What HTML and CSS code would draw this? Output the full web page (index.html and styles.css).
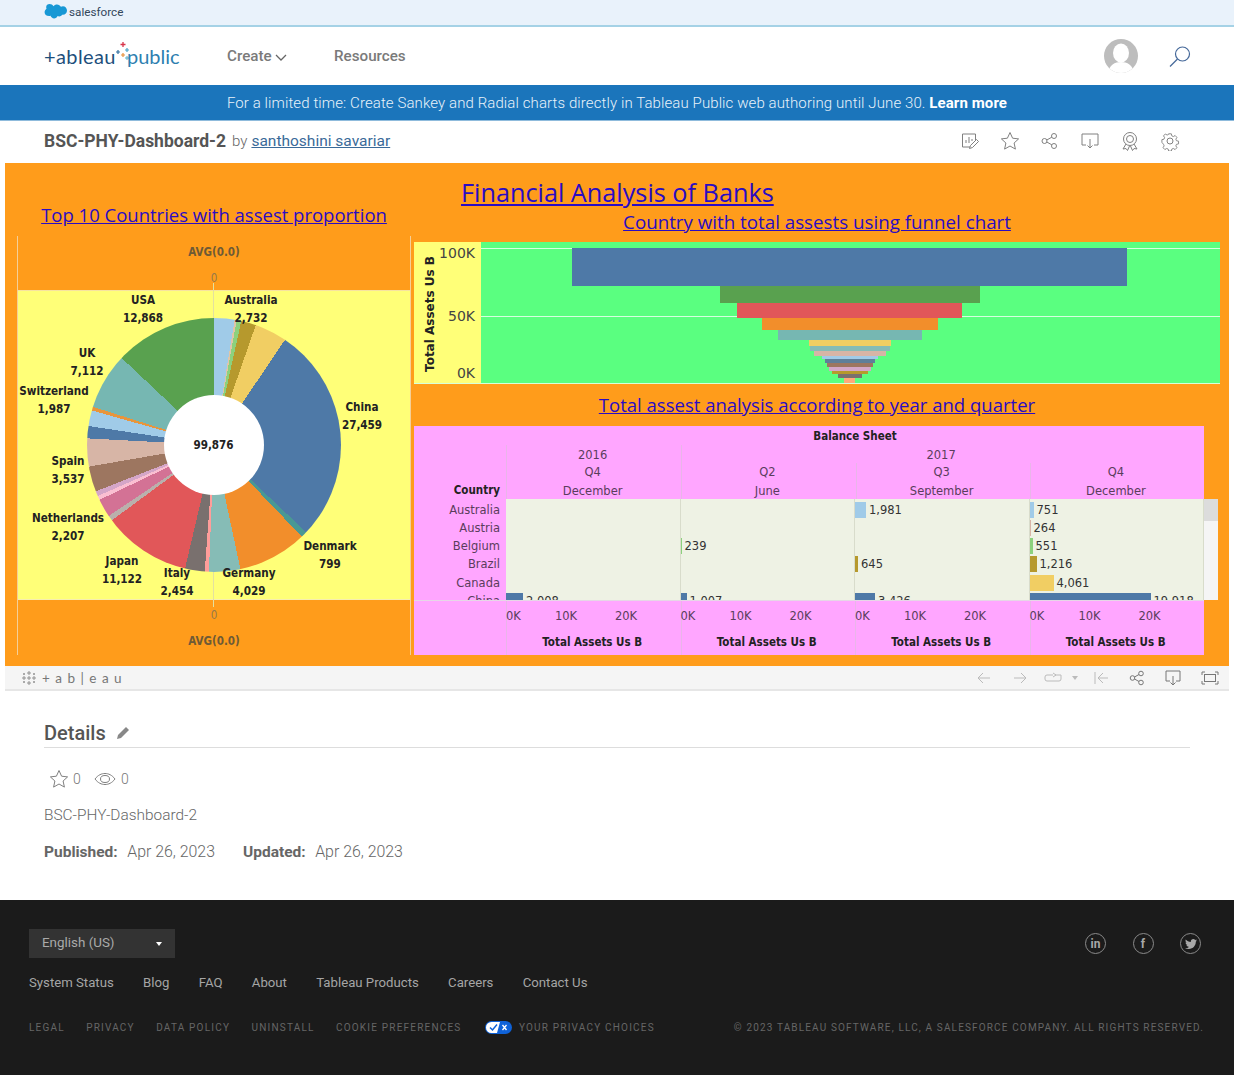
FILE: index.html
```html
<!DOCTYPE html>
<html lang="en">
<head>
    <meta charset="UTF-8">
    <meta name="viewport" content="width=device-width, initial-scale=1.0">
    <title>BSC-PHY-Dashboard-2 - Tableau Public</title>
    <link rel="stylesheet" href="styles.css">
</head>
<body>
    <div class="topbar">
        <svg class="sf-cloud" width="23" height="16" viewBox="0 0 23 16"><path d="M9.5 2.2C10.3 1 11.6.4 13 .4c1.700 0 3.200 1 3.900 2.300.7-.3 1.300-.5 2-.5 2.300 0 4.100 2 4.100 4.300s-1.800 4.300-4.100 4.300c-.3 0-.6 0-.8-.1-.6 1-1.700 1.700-3 1.700-.5 0-1-.1-1.500-.4-.6 1.400-2 2.400-3.500 2.400-1.700 0-3.100-1.100-3.600-2.600-.2 0-.5.1-.7.1C2.300 12.100.6 10.400.6 8.200c0-1.400.8-2.700 1.900-3.400C2.300 4.300 2.200 3.700 2.200 3.100 2.200 1.300 3.700 0 5.600 0c1.600 0 3 .9 3.900 2.200z" fill="#1798d5"/></svg>
        <span class="sf-name">salesforce</span>
    </div>

    <nav class="nav">
        <div class="logo">
            <span class="logo-tableau">+ableau</span>
            <svg class="logo-spark" width="14" height="24" viewBox="0 0 14 24"><path d="M7 1v5M4.500 3.500h5" stroke="#d8344a" stroke-width="1.300"/><path d="M2 9v4M0 11h4" stroke="#2f6f9f" stroke-width="1.200"/><path d="M11 7v4M9 9h4" stroke="#4aa3c7" stroke-width="1.200"/><path d="M7 12v4M5 14h4" stroke="#e8913a" stroke-width="1.200"/><path d="M11 15v4M9 17h4" stroke="#59b0c9" stroke-width="1"/></svg>
            <span class="logo-public">public</span>
        </div>
        <a class="nav-link nav-create">Create
            <svg width="12" height="7" viewBox="0 0 12 7"><path d="M1 1l5 5 5-5" fill="none" stroke="#666" stroke-width="1.300"/></svg>
        </a>
        <a class="nav-link">Resources</a>
        <div class="nav-right">
            <svg width="34" height="34" viewBox="0 0 34 34"><defs><clipPath id="avatarClip"><circle cx="17" cy="17" r="17"/></clipPath></defs><circle cx="17" cy="17" r="17" fill="#bdbdbd"/><g clip-path="url(#avatarClip)"><ellipse cx="17" cy="14" rx="8" ry="9.500" fill="#fff"/><path d="M4 34c1-8 7-11 13-11s12 3 13 11z" fill="#fff"/></g></svg>
            <svg class="search-icon" width="24" height="24" viewBox="0 0 24 24"><circle cx="14.500" cy="9" r="7" fill="none" stroke="#46699a" stroke-width="1.200"/><path d="M9.500 14L2 21.500" stroke="#46699a" stroke-width="1.200"/></svg>
        </div>
    </nav>

    <div class="banner">For a limited time: Create Sankey and Radial charts directly in Tableau Public web authoring until June 30. <b>Learn more</b></div>

    <div class="title-row">
        <h1 class="viz-title">BSC-PHY-Dashboard-2</h1>
        <span class="by">by</span>
        <a class="author">santhoshini savariar</a>
        <div class="title-icons">
            <svg width="20" height="20" viewBox="0 0 20 20"><path d="M10 16H2.500V3h13v6" class="ic"/><path d="M6 12V9M9 12V6M12 10V8" class="ic"/><path d="M9.500 17.500l1-3 6-6 2 2-6 6z" class="ic"/></svg>
            <svg width="20" height="20" viewBox="0 0 20 20"><path d="M10 1.500l2.600 5.700 6 .7-4.500 4.100 1.300 6.100-5.400-3.100-5.400 3.100 1.300-6.100L1.400 7.900l6-.7z" class="ic"/></svg>
            <svg width="20" height="20" viewBox="0 0 20 20"><circle cx="4.500" cy="10" r="2.500" class="ic"/><circle cx="14" cy="5" r="2.500" class="ic"/><circle cx="14" cy="15" r="2.500" class="ic"/><path d="M6.800 9l5-2.800M6.800 11l5 2.800" class="ic"/></svg>
            <svg width="20" height="20" viewBox="0 0 20 20"><path d="M6 14H2V3h16v11h-4" class="ic"/><path d="M10 8v9M7.500 14.500L10 17l2.500-2.500" class="ic"/></svg>
            <svg width="20" height="20" viewBox="0 0 20 20"><circle cx="10" cy="8" r="6.500" class="ic"/><circle cx="10" cy="8" r="3.500" class="ic"/><path d="M6 13l-3 5 3-.5 1.500 2 2-4.500M14 13l3 5-3-.5-1.500 2-2-4.500" class="ic"/></svg>
            <svg width="20" height="20" viewBox="0 0 20 20"><circle cx="10" cy="10" r="3" class="ic"/><path d="M8.500 2h3l.5 2.300 1.700.8 2-1.200 2 2.100-1.200 2 .7 1.700 2.300.5v3l-2.300.5-.7 1.700 1.200 2-2 2.100-2-1.200-1.700.7-.5 2.200h-3l-.5-2.200-1.700-.7-2 1.200-2-2.100 1.200-2-.7-1.700L1 11.500v-3l2.300-.5.700-1.700-1.200-2 2-2.100 2 1.200 1.700-.8z" class="ic" transform="translate(1 1) scale(.9)"/></svg>
        </div>
    </div>

    <section class="viz">
        <div class="viz-left">
            <h2 class="chart-title title-countries">Top 10 Countries with assest proportion</h2>
            <div class="pie-panel">
                <div class="pie-band pie-band-top">
                    <span class="band-label">AVG(0.0)</span>
                    <span class="band-zero">0</span>
                </div>
                <div class="pie-area">
                    <i class="axis-line axis-line-top"></i>
                    <i class="axis-line axis-line-bottom"></i>
                    <div class="pie">
                        <div class="pie-hole">99,876</div>
                    </div>
                    <div class="pie-label lbl-usa">USA<br>12,868</div>
                    <div class="pie-label lbl-australia">Australia<br>2,732</div>
                    <div class="pie-label lbl-uk">UK<br>7,112</div>
                    <div class="pie-label lbl-switzerland">Switzerland<br>1,987</div>
                    <div class="pie-label lbl-china">China<br>27,459</div>
                    <div class="pie-label lbl-spain">Spain<br>3,537</div>
                    <div class="pie-label lbl-netherlands">Netherlands<br>2,207</div>
                    <div class="pie-label lbl-denmark">Denmark<br>799</div>
                    <div class="pie-label lbl-japan">Japan<br>11,122</div>
                    <div class="pie-label lbl-italy">Italy<br>2,454</div>
                    <div class="pie-label lbl-germany">Germany<br>4,029</div>
                </div>
                <div class="pie-band pie-band-bottom">
                    <span class="band-zero">0</span>
                    <span class="band-label">AVG(0.0)</span>
                </div>
            </div>
        </div>

        <div class="viz-right">
            <h2 class="chart-title title-main">Financial Analysis of Banks</h2>
            <h2 class="chart-title title-funnel">Country with total assests using funnel chart</h2>

            <div class="funnel">
                <div class="funnel-axis">
                    <span class="funnel-axis-title">Total Assets Us B</span>
                    <span class="funnel-tick tick-100">100K</span>
                    <span class="funnel-tick tick-50">50K</span>
                    <span class="funnel-tick tick-0">0K</span>
                </div>
                <div class="funnel-plot">
                    <i class="gridline grid-100"></i>
                    <i class="gridline grid-50"></i>
                    <div class="funnel-bar t-blue" style="width:555px;height:38px"></div>
                    <div class="funnel-bar t-green" style="width:260px;height:17px"></div>
                    <div class="funnel-bar t-red" style="width:225px;height:15px"></div>
                    <div class="funnel-bar t-orange" style="width:176px;height:12px"></div>
                    <div class="funnel-bar t-teal" style="width:144px;height:10px"></div>
                    <div class="funnel-bar t-yellow" style="width:82px;height:6px"></div>
                    <div class="funnel-bar t-seafoam" style="width:80px;height:5px"></div>
                    <div class="funnel-bar t-tan" style="width:72px;height:5px"></div>
                    <div class="funnel-bar t-sky" style="width:56px;height:3px"></div>
                    <div class="funnel-bar t-slate" style="width:50px;height:4px"></div>
                    <div class="funnel-bar t-brown" style="width:46px;height:4px"></div>
                    <div class="funnel-bar t-lilac" style="width:42px;height:4px"></div>
                    <div class="funnel-bar t-olive" style="width:36px;height:3px"></div>
                    <div class="funnel-bar t-grey" style="width:24px;height:4px"></div>
                    <div class="funnel-bar t-peach" style="width:11px;height:5px"></div>
                </div>
            </div>

            <h2 class="chart-title title-table">Total assest analysis according to year and quarter</h2>

            <div class="crosstab">
                <div class="ct-sheet">Balance Sheet</div>
                <div class="ct-head">
                    <div class="ct-corner">Country</div>
                    <div class="ct-years">
                        <div class="ct-year ct-year-2016">2016</div>
                        <div class="ct-year ct-year-2017">2017</div>
                        <div class="ct-col ct-col-first">Q4<br>December</div>
                        <div class="ct-col">Q2<br>June</div>
                        <div class="ct-col">Q3<br>September</div>
                        <div class="ct-col">Q4<br>December</div>
                    </div>
                </div>
                <div class="ct-body">
                    <div class="ct-rows">
                        <div class="ct-row">Australia</div>
                        <div class="ct-row">Austria</div>
                        <div class="ct-row">Belgium</div>
                        <div class="ct-row">Brazil</div>
                        <div class="ct-row">Canada</div>
                        <div class="ct-row">China</div>
                    </div>
                    <div class="ct-pane">
                        <div class="ct-row"></div><div class="ct-row"></div><div class="ct-row"></div><div class="ct-row"></div><div class="ct-row"></div>
                        <div class="ct-row"><i class="ct-bar t-blue" style="width:17px"></i>2,008</div>
                    </div>
                    <div class="ct-pane">
                        <div class="ct-row"></div><div class="ct-row"></div>
                        <div class="ct-row"><i class="ct-bar t-mint" style="width:1px"></i>239</div>
                        <div class="ct-row"></div><div class="ct-row"></div>
                        <div class="ct-row"><i class="ct-bar t-blue" style="width:6px"></i>1,007</div>
                    </div>
                    <div class="ct-pane">
                        <div class="ct-row"><i class="ct-bar t-sky" style="width:11px"></i>1,981</div>
                        <div class="ct-row"></div><div class="ct-row"></div>
                        <div class="ct-row"><i class="ct-bar t-olive" style="width:3px"></i>645</div>
                        <div class="ct-row"></div>
                        <div class="ct-row"><i class="ct-bar t-blue" style="width:20px"></i>3,426</div>
                    </div>
                    <div class="ct-pane">
                        <div class="ct-row"><i class="ct-bar t-sky" style="width:4px"></i>751</div>
                        <div class="ct-row"><i class="ct-bar t-tan" style="width:1px"></i>264</div>
                        <div class="ct-row"><i class="ct-bar t-mint" style="width:3px"></i>551</div>
                        <div class="ct-row"><i class="ct-bar t-olive" style="width:7px"></i>1,216</div>
                        <div class="ct-row"><i class="ct-bar t-yellow" style="width:24px"></i>4,061</div>
                        <div class="ct-row"><i class="ct-bar t-blue" style="width:121px"></i>19,918</div>
                    </div>
                    <div class="ct-scroll"><i class="ct-thumb"></i></div>
                </div>
                <div class="ct-foot">
                    <div class="ct-foot-blank"></div>
                    <div class="ct-axis"><div class="ct-ticks"><span>0K</span><span>10K</span><span>20K</span></div><b>Total Assets Us B</b></div>
                    <div class="ct-axis"><div class="ct-ticks"><span>0K</span><span>10K</span><span>20K</span></div><b>Total Assets Us B</b></div>
                    <div class="ct-axis"><div class="ct-ticks"><span>0K</span><span>10K</span><span>20K</span></div><b>Total Assets Us B</b></div>
                    <div class="ct-axis"><div class="ct-ticks"><span>0K</span><span>10K</span><span>20K</span></div><b>Total Assets Us B</b></div>
                </div>
            </div>
        </div>
    </section>

    <div class="viz-toolbar">
        <div class="tb-logo">
            <svg width="16" height="16" viewBox="0 0 16 16"><path d="M8 1v4M6 3h4M8 11v4M6 13h4M1 8h4M3 6v4M11 8h4M13 6v4M8 6v4M6 8h4M3 3v2M2 4h2M13 3v2M12 4h2M3 11v2M2 12h2M13 11v2M12 12h2" stroke="#8a8a8a" stroke-width=".9" fill="none"/></svg>
            <span>+ a b | e a u</span>
        </div>
        <div class="tb-icons">
            <svg class="tb-left" width="14" height="12" viewBox="0 0 14 12"><path d="M13 6H1M6 1L1 6l5 5" class="ic-light"/></svg>
            <svg class="tb-right" width="14" height="12" viewBox="0 0 14 12"><path d="M1 6h12M8 1l5 5-5 5" class="ic-light"/></svg>
            <svg class="tb-replay" width="18" height="12" viewBox="0 0 18 12"><path d="M9 3H3a2 2 0 0 0-2 2v2a2 2 0 0 0 2 2h12a2 2 0 0 0 2-2V3H11M9 1l3 2-3 2" class="ic-light"/></svg>
            <span class="tb-caret"></span>
            <svg class="tb-first" width="15" height="14" viewBox="0 0 15 14"><path d="M1 1v12M14 7H4M9 2L4 7l5 5" class="ic-light"/></svg>
            <svg class="tb-share" width="16" height="16" viewBox="0 0 16 16"><circle cx="3.500" cy="8" r="2.300" class="ic-dark"/><circle cx="12" cy="3.500" r="2.300" class="ic-dark"/><circle cx="12" cy="12.500" r="2.300" class="ic-dark"/><path d="M5.500 7l4.500-2.500M5.500 9l4.500 2.500" class="ic-dark"/></svg>
            <svg class="tb-download" width="16" height="16" viewBox="0 0 16 16"><path d="M5 11H1V1h14v10h-4" class="ic-dark"/><path d="M8 6v9M5.500 12.500L8 15l2.500-2.500" class="ic-dark"/></svg>
            <svg class="tb-full" width="18" height="14" viewBox="0 0 18 14"><path d="M1 4V1h3M14 1h3v3M17 10v3h-3M4 13H1v-3" class="ic-dark"/><rect x="3.500" y="3.500" width="11" height="7" class="ic-dark"/></svg>
        </div>
    </div>

    <section class="details">
        <div class="details-head">
            <h3>Details</h3>
            <svg width="15" height="15" viewBox="0 0 15 15"><path d="M1 14l1-4 8-8 3 3-8 8z" fill="#888"/></svg>
        </div>
        <div class="stats">
            <svg width="20" height="20" viewBox="0 0 20 20"><path d="M10 1.500l2.600 5.700 6 .7-4.500 4.100 1.300 6.100-5.400-3.100-5.400 3.100 1.300-6.100L1.400 7.900l6-.7z" class="ic"/></svg>
            <span class="stat-num">0</span>
            <svg class="stat-eye" width="22" height="14" viewBox="0 0 22 14"><path d="M1 7c3-4 6.500-5.500 10-5.500S18 3 21 7c-3 4-6.500 5.500-10 5.500S4 11 1 7z" class="ic"/><ellipse cx="11" cy="7" rx="4.500" ry="3.500" class="ic"/></svg>
            <span class="stat-num">0</span>
        </div>
        <p class="details-name">BSC-PHY-Dashboard-2</p>
        <p class="details-dates"><b>Published:</b><span class="date-val date-first">Apr 26, 2023</span><b>Updated:</b><span class="date-val">Apr 26, 2023</span></p>
    </section>

    <footer class="footer">
        <div class="footer-top">
            <div class="lang">English (US)<i class="lang-caret"></i></div>
            <div class="social">
                <span class="social-ico">in</span>
                <span class="social-ico">f</span>
                <span class="social-ico">
                    <svg width="12" height="10" viewBox="0 0 12 10"><path d="M12 1.200c-.4.200-.9.300-1.400.4.500-.3.900-.8 1.100-1.300-.5.300-1 .5-1.500.6C9.700.3 9 0 8.300 0 6.900 0 5.800 1.100 5.800 2.500c0 .2 0 .4.100.6C3.800 3 2 2 .8.500.6.900.5 1.300.5 1.800c0 .9.400 1.600 1.100 2.100-.4 0-.8-.1-1.100-.3 0 1.200.9 2.200 2 2.500-.4.100-.8.100-1.100 0 .3 1 1.200 1.700 2.300 1.700C3.800 8.600 2.500 9 1.200 9c-.4 0-.8 0-1.200-.1C1.100 9.600 2.400 10 3.800 10c4.500 0 7-3.800 7-7v-.3c.5-.4.900-.9 1.200-1.500z" fill="#a8a8a8"/></svg>
                </span>
            </div>
        </div>
        <div class="footer-links">
            <a>System Status</a><a>Blog</a><a>FAQ</a><a>About</a><a>Tableau Products</a><a>Careers</a><a>Contact Us</a>
        </div>
        <div class="footer-legal">
            <a>LEGAL</a><a>PRIVACY</a><a>DATA POLICY</a><a>UNINSTALL</a><a>COOKIE PREFERENCES</a>
            <span class="privacy-choice">
                <svg width="27" height="13" viewBox="0 0 27 13"><rect width="27" height="13" rx="6.500" fill="#0f62d8"/><path d="M6.500 1H15l-3 11H6.500a5.500 5.500 0 0 1 0-11z" fill="#fff"/><path d="M5 6.500l2.500 2.500L12 3.500" stroke="#0f62d8" stroke-width="1.500" fill="none"/><path d="M17.500 4l4 5M21.500 4l-4 5" stroke="#fff" stroke-width="1.300"/></svg>
                <a>YOUR PRIVACY CHOICES</a>
            </span>
            <span class="copyright">© 2023 TABLEAU SOFTWARE, LLC, A SALESFORCE COMPANY. ALL RIGHTS RESERVED.</span>
        </div>
    </footer>
</body>
</html>
```

FILE: styles.css
```css
* {
    box-sizing: border-box;
}
body {
    margin: 0;
    font-family: Roboto, "Liberation Sans", sans-serif;
    background: #fff;
    color: #555;
    overflow: hidden;
}
i {
    display: block;
}
.ic {
    fill: none;
    stroke: #808080;
    stroke-width: 1;
}
.ic-light {
    fill: none;
    stroke: #bbb;
    stroke-width: 1;
}
.ic-dark {
    fill: none;
    stroke: #777;
    stroke-width: 1;
}

/* header */
.topbar {
    height: 27px;
    display: flex;
    align-items: center;
    gap: 2px;
    padding: 0 0 1px 44px;
    background: #e9f2fb;
    border-bottom: 2px solid #a5d2e6;
}
.sf-name {
    font-size: 11.700px;
    color: #33475b;
}
.nav {
    height: 58px;
    display: flex;
    align-items: center;
    padding: 0 44px;
}
.logo {
    display: flex;
    align-items: center;
    width: 183px;
    font-family: Lato, sans-serif;
    font-size: 20px;
}
.logo-tableau {
    color: #1d4f7c;
    letter-spacing: .4px;
}
.logo-public {
    color: #2e7fb0;
}
.logo-spark {
    margin: -6px -3px 0 0;
}
.nav-link {
    font-size: 15.200px;
    font-weight: 500;
    color: #7a7a7a;
}
.nav-create {
    width: 107px;
}
.nav-right {
    margin-left: auto;
    margin-right: -2px;
    display: flex;
    align-items: center;
    gap: 30px;
}
.search-icon {
    margin-top: 2px;
}
.banner {
    height: 36px;
    line-height: 36px;
    text-align: center;
    background: #1b75bb;
    color: #e8f2fa;
    font-size: 15px;
    font-weight: 300;
    letter-spacing: .1px;
    border-bottom: 1px solid #8fbbdc;
}
.banner b {
    font-weight: 700;
    color: #fff;
}
.title-row {
    height: 42px;
    display: flex;
    align-items: center;
    padding: 0 44px 3px;
}
.viz-title {
    margin: 0 6px 0 0;
    font-size: 17.500px;
    font-weight: 700;
    color: #555;
}
.by {
    font-size: 15px;
    font-weight: 300;
    color: #666;
    margin-right: 4px;
}
.author {
    font-size: 15.500px;
    color: #3a6a99;
    text-decoration: underline;
}
.title-icons {
    margin-left: auto;
    display: flex;
    gap: 20px;
    margin-right: 10px;
}

/* dashboard */
.viz {
    margin: 0 5px;
    height: 503px;
    display: flex;
    background: #ff9c1b;
    font-family: "DejaVu Sans", sans-serif;
}
.chart-title {
    margin: 0;
    font-family: "Open Sans", sans-serif;
    font-weight: 400;
    color: #2a0bc4;
    text-decoration: underline;
    white-space: nowrap;
}
.viz-left {
    width: 406px;
    padding: 40px 0 0 12px;
    flex: none;
}
.title-countries {
    height: 33px;
    font-size: 18.500px;
    line-height: 24px;
    text-align: center;
}
.pie-panel {
    width: 394px;
    height: 419px;
    border-left: 1px solid #f5cf98;
    border-right: 1px solid #f5cf98;
    display: flex;
    flex-direction: column;
}
.pie-band {
    height: 54px;
    flex: none;
    display: flex;
    flex-direction: column;
    align-items: center;
    font-family: "DejaVu Sans Condensed", "DejaVu Sans", sans-serif;
    font-size: 11.500px;
    font-weight: 700;
    color: #6e5a36;
}
.pie-band-top {
    padding-top: 9px;
    gap: 12px;
}
.pie-band-bottom {
    padding-top: 8px;
    gap: 12px;
    height: 55px;
}
.band-zero {
    font-weight: 400;
    color: #96794a;
}
.band-label,
.band-zero {
    line-height: 14px;
}
.pie-area {
    position: relative;
    height: 310px;
    padding-right: 1px;
    background: #ffff78;
    border-top: 1px solid #f7e3a0;
    border-bottom: 1px solid #f7eeb0;
    display: flex;
    align-items: center;
    justify-content: center;
}
.axis-line {
    position: absolute;
    left: 195px;
    width: 1px;
    background: #e3e0a0;
}
.axis-line-top {
    top: -8px;
    height: 40px;
}
.axis-line-bottom {
    bottom: -8px;
    height: 36px;
}
.pie {
    position: relative;
    width: 254px;
    height: 254px;
    border-radius: 50%;
    display: flex;
    align-items: center;
    justify-content: center;
    background: conic-gradient(
        #a0cbe8 0 9.4deg, #dfc5a8 9.4deg 10.3deg, #8cd17d 10.3deg 12.4deg,
        #b6992d 12.4deg 19.2deg, #f1ce63 19.2deg 34deg, #4e79a7 34deg 133.4deg,
        #499894 133.4deg 136.2deg, #f28e2b 136.2deg 168deg, #86bcb6 168deg 182.3deg,
        #ff9d9a 182.3deg 184.2deg, #79706e 184.2deg 193.2deg, #e15759 193.2deg 233.6deg,
        #bab0ac 233.6deg 236deg, #d37295 236deg 244.4deg, #fabfd2 244.4deg 246.3deg,
        #d4a6c8 246.3deg 248.6deg, #9d7660 248.6deg 260.2deg, #d7b5a6 260.2deg 273deg,
        #4e79a7 273deg 278.6deg, #a0cbe8 278.6deg 285.8deg, #e8953c 285.8deg 287.5deg,
        #76b7b2 287.5deg 313.3deg, #59a14f 313.3deg 360deg
    );
}
.pie-hole {
    width: 100px;
    height: 100px;
    border-radius: 50%;
    background: #fff;
    display: flex;
    align-items: center;
    justify-content: center;
    font-family: "DejaVu Sans Condensed", "DejaVu Sans", sans-serif;
    font-size: 11.600px;
    font-weight: 700;
    color: #222;
}
.pie-label {
    position: absolute;
    width: 100px;
    text-align: center;
    font-family: "DejaVu Sans Condensed", "DejaVu Sans", sans-serif;
    font-size: 11.600px;
    font-weight: 700;
    line-height: 17.5px;
    color: #222;
}
.lbl-usa { left: 75px; top: 1px; }
.lbl-australia { left: 183px; top: 1px; }
.lbl-uk { left: 19px; top: 54px; }
.lbl-switzerland { left: -14px; top: 92px; }
.lbl-china { left: 294px; top: 108px; }
.lbl-spain { left: 0; top: 162px; }
.lbl-netherlands { left: 0; top: 219px; }
.lbl-denmark { left: 262px; top: 247px; }
.lbl-japan { left: 54px; top: 262px; }
.lbl-italy { left: 109px; top: 274px; }
.lbl-germany { left: 181px; top: 274px; }

.viz-right {
    flex: 1;
    padding-left: 3px;
}
.title-main {
    height: 49px;
    padding: 14px 0 0 47px;
    font-size: 25.250px;
    line-height: 30px;
}
.title-funnel {
    width: 806px;
    height: 30px;
    font-size: 18.750px;
    line-height: 20px;
    text-align: center;
}
.funnel {
    width: 806px;
    height: 142px;
    display: flex;
    background: #5aff80;
    border-bottom: 1px solid #d8ffd8;
}
.funnel-axis {
    position: relative;
    width: 67px;
    flex: none;
    background: #ffff78;
}
.funnel-axis-title {
    position: absolute;
    left: 9px;
    bottom: 11px;
    writing-mode: vertical-rl;
    transform: rotate(180deg);
    font-size: 12px;
    font-weight: 700;
    color: #222;
    white-space: nowrap;
}
.funnel-tick {
    position: absolute;
    right: 6px;
    font-size: 14px;
    line-height: 16px;
    color: #444;
}
.tick-100 { top: 3px; }
.tick-50 { top: 66px; }
.tick-0 { top: 123px; }
.funnel-plot {
    position: relative;
    flex: 1;
    padding: 6px 2px 0 0;
    display: flex;
    flex-direction: column;
    align-items: center;
}
.gridline {
    position: absolute;
    left: 0;
    right: 0;
    height: 1px;
    background: #d6ffe0;
}
.grid-100 { top: 6px; }
.grid-50 { top: 74px; }
.funnel-bar {
    position: relative;
    flex: none;
}
.t-blue { background: #4e79a7; }
.t-green { background: #59a14f; }
.t-red { background: #e15759; }
.t-orange { background: #f28e2b; }
.t-teal { background: #76b7b2; }
.t-yellow { background: #f1ce63; }
.t-seafoam { background: #86bcb6; }
.t-tan { background: #d7b5a6; }
.t-sky { background: #a0cbe8; }
.t-slate { background: #5f7f99; }
.t-brown { background: #9d7660; }
.t-lilac { background: #d4a6c8; }
.t-olive { background: #b6992d; }
.t-grey { background: #79706e; }
.t-peach { background: #ffa97a; }
.t-mint { background: #8cd17d; }
.title-table {
    width: 806px;
    height: 42px;
    font-size: 18.550px;
    line-height: 41px;
    text-align: center;
}

/* crosstab */
.crosstab {
    width: 804px;
    height: 229px;
    font-size: 11.500px;
    color: #5a3d5c;
}
.ct-sheet {
    width: 790px;
    height: 19px;
    padding-left: 92px;
    text-align: center;
    line-height: 21px;
    font-family: "DejaVu Sans Condensed", "DejaVu Sans", sans-serif;
    font-weight: 700;
    color: #222;
    background: #ffa6ff;
}
.ct-head {
    width: 790px;
    height: 54px;
    display: flex;
    background: #ffa6ff;
}
.ct-corner {
    width: 92px;
    padding: 36px 6px 0 0;
    text-align: right;
    font-family: "DejaVu Sans Condensed", "DejaVu Sans", sans-serif;
    font-weight: 700;
    line-height: 18px;
    color: #222;
}
.ct-years {
    flex: 1;
    display: grid;
    grid-template-columns: repeat(4, 1fr);
    grid-template-rows: 18px 36px;
    text-align: center;
    line-height: 18.5px;
    border-left: 1px solid #e9b5e9;
}
.ct-year-2016 {
    grid-column: 1;
    grid-row: 1;
    padding: 1px 3px 0 0;
}
.ct-year-2017 {
    grid-column: 2 / span 3;
    grid-row: 1;
    padding: 1px 4px 0 0;
    border-left: 1px solid #e9b5e9;
}
.ct-col {
    grid-row: 2;
    padding: 0 3px 0 0;
}
.ct-col + .ct-col {
    border-left: 1px solid #e9b5e9;
}
.ct-body {
    height: 101px;
    display: flex;
    overflow: hidden;
    line-height: 18.250px;
}
.ct-rows {
    width: 92px;
    flex: none;
    padding: 1.500px 6px 0 0;
    text-align: right;
    background: #ffa6ff;
}
.ct-pane {
    width: 174.500px;
    flex: none;
    padding-top: 1.500px;
    background: #eef2e4;
    border-right: 1px solid #d8dccb;
    color: #333;
}
.ct-row {
    height: 18.250px;
    display: flex;
    align-items: center;
    justify-content: flex-end;
    white-space: nowrap;
}
.ct-pane .ct-row {
    justify-content: flex-start;
    gap: 3px;
}
.ct-bar {
    height: 16px;
    flex: none;
}
.ct-scroll {
    width: 14px;
    flex: none;
    background: #f5f5f5;
}
.ct-thumb {
    height: 22px;
    background: #dcdcdc;
}
.ct-foot {
    width: 790px;
    height: 55px;
    display: flex;
    background: #ffa6ff;
    border-top: 1px solid #e6d6e6;
}
.ct-foot-blank {
    width: 92px;
    flex: none;
}
.ct-axis {
    width: 174.500px;
    flex: none;
    padding-right: 3px;
    text-align: center;
    border-left: 1px solid #e9b5e9;
}
.ct-axis b {
    display: block;
    color: #222;
    font-family: "DejaVu Sans Condensed", "DejaVu Sans", sans-serif;
    line-height: 14px;
    margin-top: 4px;
}
.ct-ticks {
    height: 30px;
    display: grid;
    grid-template-columns: 39px 42px 78px;
    margin-left: -1px;
    padding-top: 8px;
    line-height: 14px;
}
.ct-ticks span:first-child {
    text-align: left;
}

/* toolbar under the viz */
.viz-toolbar {
    height: 25px;
    margin: 0 5px;
    display: flex;
    align-items: center;
    justify-content: space-between;
    background: #f5f5f5;
    border-bottom: 2px solid #e6e6e6;
    padding: 0 10px 0 16px;
}
.tb-logo {
    display: flex;
    align-items: center;
    gap: 5px;
    font-family: Lato, sans-serif;
    font-size: 13.500px;
    letter-spacing: 1px;
    color: #777;
}
.tb-icons {
    display: flex;
    align-items: center;
    gap: 20px;
}
.tb-left {
    margin-right: 2px;
}
.tb-right {
    margin-right: -3px;
}
.tb-caret {
    width: 0;
    height: 0;
    margin-left: -9.500px;
    margin-right: -4px;
    border: 3.500px solid transparent;
    border-top: 4px solid #bbb;
    border-bottom: 0;
}

/* details */
.details {
    height: 209px;
    padding: 29px 44px 0;
}
.details-head {
    height: 28px;
    display: flex;
    align-items: center;
    gap: 10px;
    border-bottom: 1px solid #ddd;
    padding-bottom: 2px;
}
.details-head h3 {
    margin: 0;
    font-size: 20px;
    font-weight: 500;
    color: #555;
}
.stats {
    display: flex;
    align-items: center;
    height: 20px;
    margin: 21px 0 0 5px;
    gap: 5px;
}
.stats svg:first-child {
    margin-right: -1px;
}
.stat-num {
    font-size: 14px;
    font-weight: 300;
    color: #777;
    width: 9px;
}
.stat-eye {
    margin-left: 7px;
}
.details-name {
    margin: 17px 0 0;
    font-size: 15.400px;
    font-weight: 300;
    line-height: 18px;
    color: #666;
}
.details-dates {
    margin: 18px 0 0;
    font-size: 15.500px;
    font-weight: 300;
    line-height: 19px;
    color: #666;
}
.details-dates b {
    font-weight: 700;
    color: #666;
    margin-right: 9.500px;
}
.date-val {
    font-size: 15.900px;
}
.date-first {
    margin-right: 28px;
}

/* footer */
.footer {
    height: 175px;
    padding: 29px 33px 0 29px;
    background: #1b1b1b;
}
.footer-top {
    display: flex;
    justify-content: space-between;
    align-items: center;
    height: 29px;
}
.lang {
    position: relative;
    width: 146px;
    height: 29px;
    padding-left: 13px;
    line-height: 28px;
    background: #333;
    color: #aaa;
    font-size: 13.400px;
}
.lang-caret {
    position: absolute;
    left: 127px;
    top: 13px;
    border: 3px solid transparent;
    border-top: 4px solid #fff;
    border-bottom: 0;
}
.social {
    display: flex;
    gap: 26.500px;
}
.social-ico {
    width: 21px;
    height: 21px;
    border: 1px solid #8a8a8a;
    border-radius: 50%;
    display: flex;
    align-items: center;
    justify-content: center;
    color: #a8a8a8;
    font-size: 12px;
    font-weight: 700;
}
.footer-links {
    display: flex;
    gap: 29.300px;
    margin-top: 16px;
    font-size: 13.200px;
    line-height: 18px;
    color: #a5a5a5;
}
.footer-legal {
    display: flex;
    align-items: center;
    gap: 21.400px;
    margin-top: 29px;
    font-size: 10px;
    letter-spacing: 1.200px;
    color: #666;
    white-space: nowrap;
}
.privacy-choice {
    display: flex;
    align-items: center;
    gap: 7px;
    margin-left: 2px;
}
.copyright {
    margin-left: auto;
    margin-right: -3px;
    letter-spacing: 1.150px;
}
```
